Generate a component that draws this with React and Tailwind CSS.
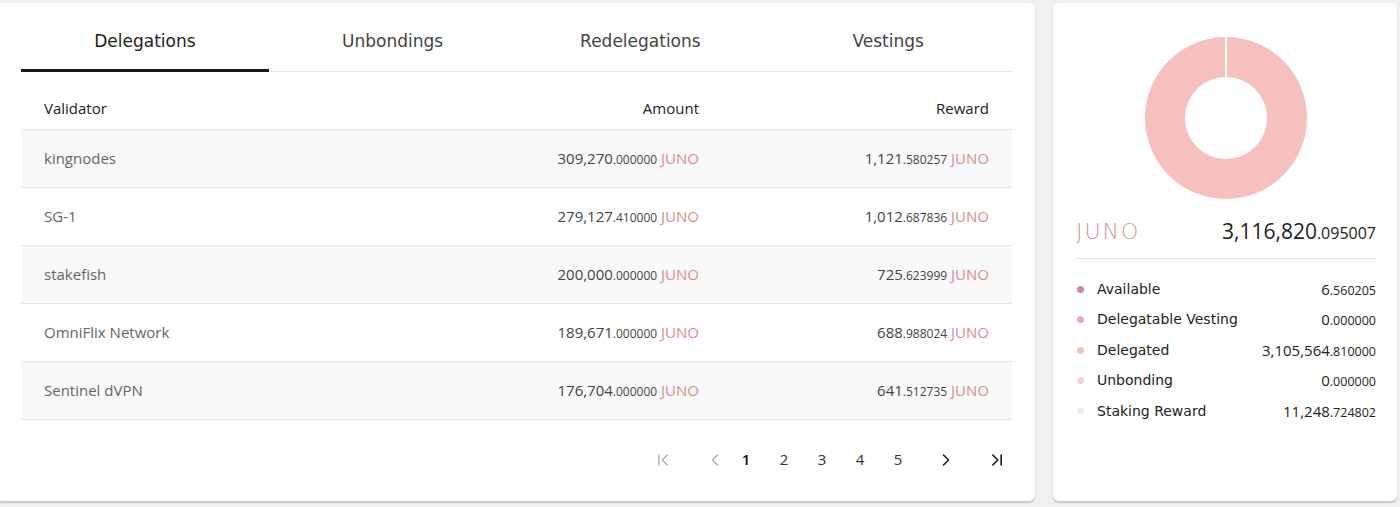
import React, { useState } from 'react';
import { ChevronFirst, ChevronLeft, ChevronRight, ChevronLast } from 'lucide-react';

const tabs = ['Delegations', 'Unbondings', 'Redelegations', 'Vestings'];

const rows = [
  { name: 'kingnodes', amt: ['309,270', '000000'], rew: ['1,121', '580257'] },
  { name: 'SG-1', amt: ['279,127', '410000'], rew: ['1,012', '687836'] },
  { name: 'stakefish', amt: ['200,000', '000000'], rew: ['725', '623999'] },
  { name: 'OmniFlix Network', amt: ['189,671', '000000'], rew: ['688', '988024'] },
  { name: 'Sentinel dVPN', amt: ['176,704', '000000'], rew: ['641', '512735'] },
];

const legend = [
  { label: 'Available', color: 'bg-[#c98c90]', val: ['6', '560205'] },
  { label: 'Delegatable Vesting', color: 'bg-[#eeaaaa]', val: ['0', '000000'] },
  { label: 'Delegated', color: 'bg-[#f5c0bd]', val: ['3,105,564', '810000'] },
  { label: 'Unbonding', color: 'bg-[#f6d2cf]', val: ['0', '000000'] },
  { label: 'Staking Reward', color: 'bg-[#ededed]', val: ['11,248', '724802'] },
];

function Amount({ v }) {
  return (
    <span className="text-[#444]">
      {v[0]}<span className="text-[12px]">.{v[1]}</span>{' '}
      <span className="text-[#dc8d8d]">JUNO</span>
    </span>
  );
}

export default function App() {
  const [tab, setTab] = useState(0);

  return (
    <div className="min-h-[507px] bg-[#f1f1f1] pt-[3px] pr-[3px] flex gap-[18px] font-['Open_Sans',sans-serif]">
      {/* left card */}
      <div className="w-[1035px] h-[498px] bg-white rounded-br-[6px] rounded-tr-[6px] shadow-[0_2px_2px_rgba(0,0,0,0.18)] pl-[21px] pr-[23px] pt-[12px] flex flex-col">
        <div className="flex border-b border-[#e6e6e6] font-['DejaVu_Sans',sans-serif]">
          {tabs.map((t, i) => (
            <button
              key={t}
              onClick={() => setTab(i)}
              className={`flex-1 h-[57px] text-[17px] border-b-[3px] -mb-px ${
                i === tab ? 'border-[#1a1a1a] text-[#1e1e1e]' : 'border-transparent text-[#444]'
              }`}
            >
              {t}
            </button>
          ))}
        </div>

        <div className="grid grid-cols-[1fr_260px_290px] px-[23px] h-[58px] items-end pb-[10px] border-b border-[#e6e6e6] text-[15px] font-medium text-[#222]">
          <div>Validator</div>
          <div className="text-right">Amount</div>
          <div className="text-right">Reward</div>
        </div>

        {rows.map((r, i) => (
          <div
            key={r.name}
            className={`grid grid-cols-[1fr_260px_290px] px-[23px] h-[58px] items-center border-b border-[#e6e6e6] text-[15px] ${
              i % 2 === 0 ? 'bg-[#f9f9f9]' : 'bg-white'
            }`}
          >
            <div className="text-[#666]">{r.name}</div>
            <div className="text-right"><Amount v={r.amt} /></div>
            <div className="text-right"><Amount v={r.rew} /></div>
          </div>
        ))}

        <div className="flex-1 flex items-center justify-end text-[15px] text-[#333] -mt-[2px]">
          <span className="w-[30px] flex justify-center text-[#aaa]"><ChevronFirst size={20} strokeWidth={1.6} /></span>
          <span className="w-[24px] ml-[25px] flex justify-center text-[#aaa]"><ChevronLeft size={20} strokeWidth={1.6} /></span>
          <span className="w-[38px] text-center font-semibold text-[#111]">1</span>
          <span className="w-[38px] text-center">2</span>
          <span className="w-[38px] text-center">3</span>
          <span className="w-[38px] text-center">4</span>
          <span className="w-[38px] text-center">5</span>
          <span className="w-[30px] ml-[14px] flex justify-center text-[#222]"><ChevronRight size={20} strokeWidth={2} /></span>
          <span className="w-[30px] ml-[21px] flex justify-center text-[#222]"><ChevronLast size={20} strokeWidth={2} /></span>
        </div>
      </div>

      {/* right card */}
      <div className="flex-1 h-[498px] bg-white rounded-[6px] shadow-[0_2px_2px_rgba(0,0,0,0.18)] pl-[23px] pr-[21px] pt-[34px] flex flex-col">
        <div className="flex justify-center">
          <svg width="162" height="162" viewBox="0 0 162 162">
            <circle cx="81" cy="81" r="61" fill="none" stroke="#f5c0bd" strokeWidth="40" />
            <rect x="80" y="0" width="2" height="41" fill="#fff" />
          </svg>
        </div>

        <div className="flex items-center justify-between mt-[16px] pb-[10px] border-b border-[#e4e4e4]">
          <span className="font-['DejaVu_Sans',sans-serif] font-extralight text-[22px] tracking-[2px] text-[#d69494]">JUNO</span>
          <span className="text-[21px] text-[#222]">
            3,116,820<span className="text-[16px]">.095007</span>
          </span>
        </div>

        <div className="mt-[15px] flex flex-col">
          {legend.map((l) => (
            <div key={l.label} className="h-[30.5px] flex items-center">
              <span className={`w-[7px] h-[7px] rounded-full ml-[1px] ${l.color}`} />
              <span className="ml-[13px] font-['DejaVu_Sans',sans-serif] text-[14px] text-[#222]">{l.label}</span>
              <span className="ml-auto text-[15px] text-[#222]">
                {l.val[0]}<span className="text-[12.5px]">.{l.val[1]}</span>
              </span>
            </div>
          ))}
        </div>
      </div>
    </div>
  );
}
